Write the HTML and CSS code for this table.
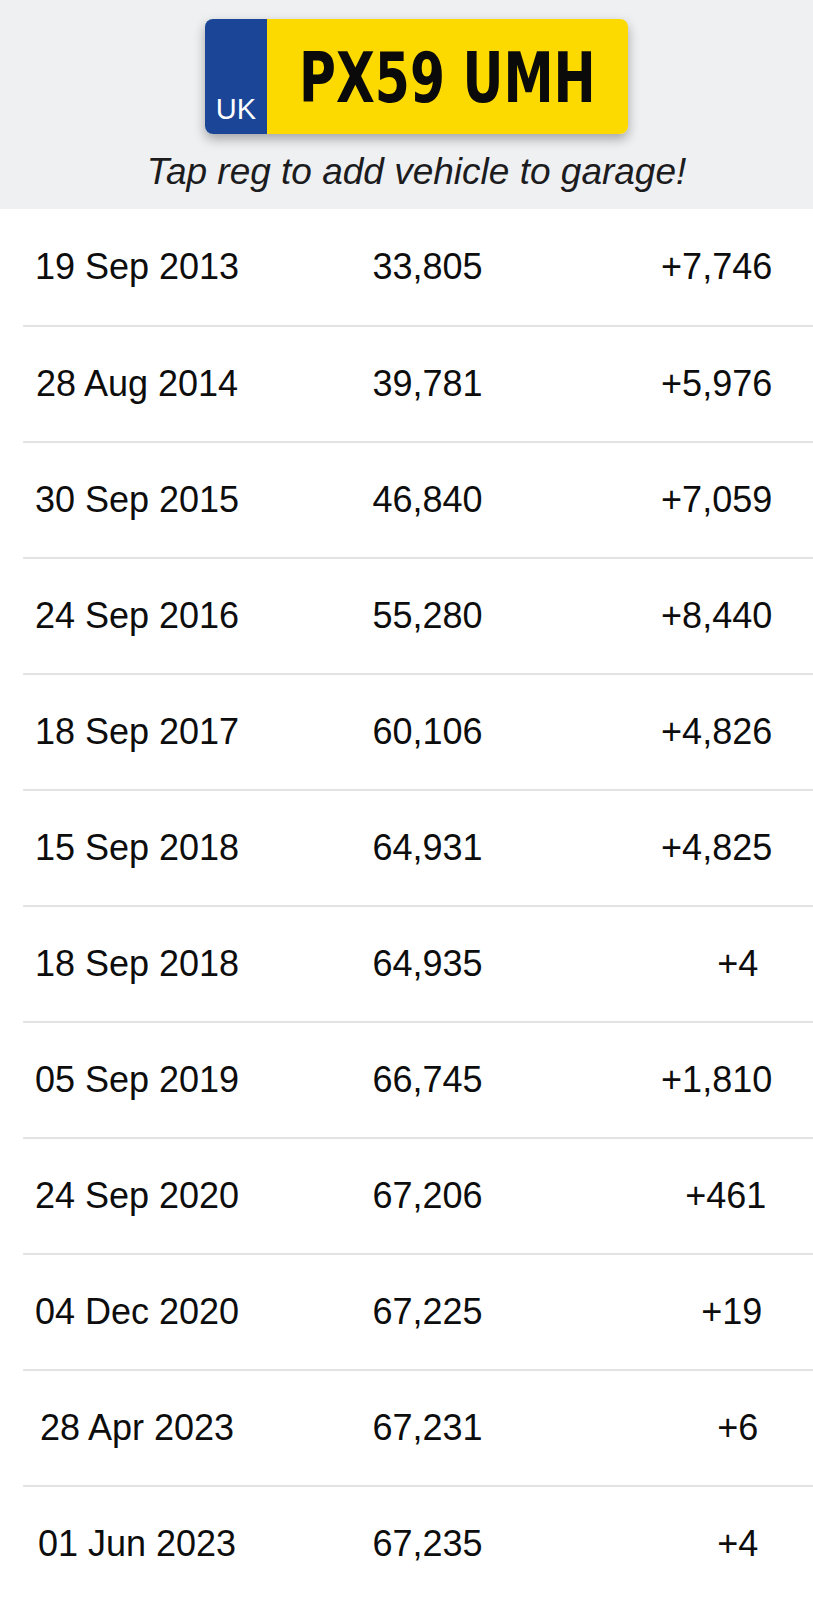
FILE: index.html
```html
<!DOCTYPE html>
<html lang="en">
<head>
<meta charset="utf-8">
<title>Mileage history</title>
<link rel="stylesheet" href="styles.css">
</head>
<body>
<header class="header">
  <div class="plate">
    <div class="plate-band"><span class="plate-uk">UK</span></div>
    <div class="plate-main"><span class="plate-reg">PX59 UMH</span></div>
  </div>
  <p class="hint">Tap reg to add vehicle to garage!</p>
</header>
<main class="list">
  <div class="row"><span class="date">19 Sep 2013</span><span class="miles">33,805</span><span class="diff">+7,746</span></div>
  <div class="row"><span class="date">28 Aug 2014</span><span class="miles">39,781</span><span class="diff">+5,976</span></div>
  <div class="row"><span class="date">30 Sep 2015</span><span class="miles">46,840</span><span class="diff">+7,059</span></div>
  <div class="row"><span class="date">24 Sep 2016</span><span class="miles">55,280</span><span class="diff">+8,440</span></div>
  <div class="row"><span class="date">18 Sep 2017</span><span class="miles">60,106</span><span class="diff">+4,826</span></div>
  <div class="row"><span class="date">15 Sep 2018</span><span class="miles">64,931</span><span class="diff">+4,825</span></div>
  <div class="row"><span class="date">18 Sep 2018</span><span class="miles">64,935</span><span class="diff">+4</span></div>
  <div class="row"><span class="date">05 Sep 2019</span><span class="miles">66,745</span><span class="diff">+1,810</span></div>
  <div class="row"><span class="date">24 Sep 2020</span><span class="miles">67,206</span><span class="diff">+461</span></div>
  <div class="row"><span class="date">04 Dec 2020</span><span class="miles">67,225</span><span class="diff">+19</span></div>
  <div class="row"><span class="date">28 Apr 2023</span><span class="miles">67,231</span><span class="diff">+6</span></div>
  <div class="row"><span class="date">01 Jun 2023</span><span class="miles">67,235</span><span class="diff">+4</span></div>
</main>
</body>
</html>
```
FILE: styles.css
```css
* { box-sizing: border-box; }
html, body { margin: 0; padding: 0; }
body {
  background: #ffffff;
  font-family: "Liberation Sans", Arial, sans-serif;
  color: #111111;
  width: 813px;
  overflow: hidden;
}
.header {
  background: #eff0f2;
  height: 209px;
  padding: 19px 0 0 20px;
  display: flex;
  flex-direction: column;
  align-items: center;
}
.plate {
  width: 423px;
  height: 115px;
  display: flex;
  border-radius: 8px;
  overflow: hidden;
  box-shadow: 0 5px 12px rgba(0, 0, 0, 0.32);
}
.plate-band {
  flex: 0 0 62px;
  width: 62px;
  background: #1b4596;
  display: flex;
  align-items: flex-end;
  justify-content: center;
  padding-bottom: 10px;
}
.plate-uk {
  color: #ffffff;
  font-size: 29px;
  line-height: 29px;
  font-family: "Liberation Sans", Arial, sans-serif;
}
.plate-main {
  flex: 1 1 auto;
  min-width: 0;
  background: #fcda00;
  display: flex;
  align-items: center;
  justify-content: center;
  padding-top: 2px;
}
.plate-reg {
  flex: none;
  display: inline-block;
  font-family: "DejaVu Sans Condensed", "DejaVu Sans", sans-serif;
  font-weight: bold;
  font-size: 70px;
  line-height: 70px;
  color: #0a0a0a;
  white-space: nowrap;
  transform: scaleX(0.8);
}
.hint {
  margin: 16px 0 0;
  font-style: italic;
  font-size: 37px;
  line-height: 44px;
  color: #1c1c1e;
  white-space: nowrap;
}
.list {
  display: flex;
  flex-direction: column;
}
.row {
  margin-left: 23px;
  height: 116px;
  display: grid;
  grid-template-columns: 228px 353px 1fr;
  align-items: center;
  font-size: 36px;
  color: #0d0d0d;
}
.row + .row {
  border-top: 2px solid #e3e3e5;
}
.date, .miles {
  text-align: center;
  white-space: nowrap;
}
.diff {
  justify-self: start;
  white-space: nowrap;
  margin-left: 146px;
  transform: translateX(-80%);
}
```
